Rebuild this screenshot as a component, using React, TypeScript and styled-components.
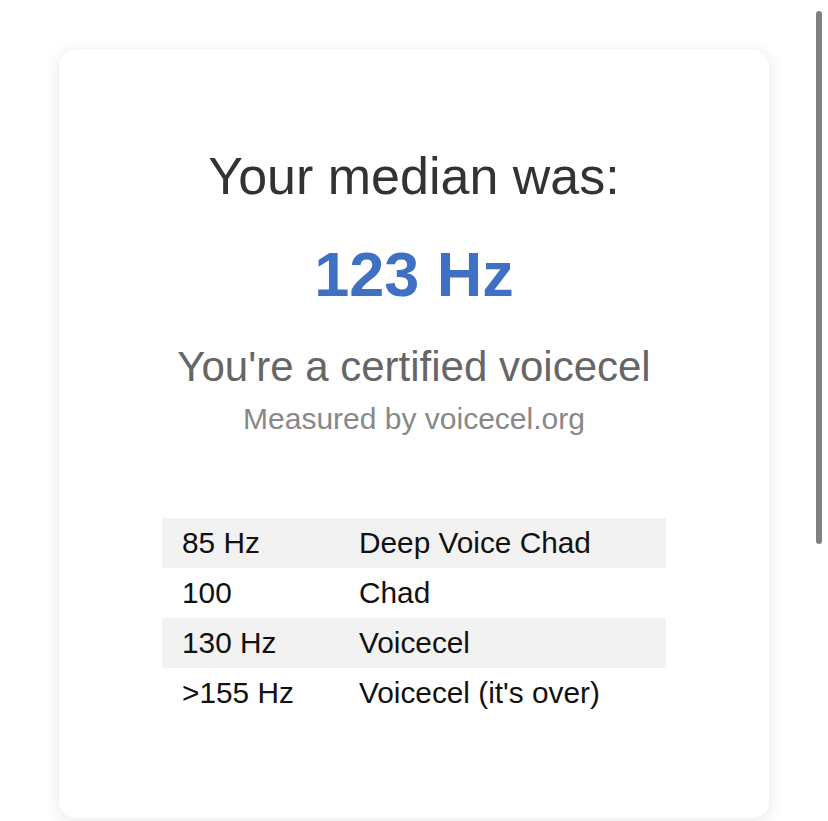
import React from "react";
import styled, { createGlobalStyle } from "styled-components";

const GlobalStyle = createGlobalStyle`
  html, body {
    margin: 0;
    padding: 0;
    background: #ffffff;
    overflow: hidden;
  }
  body {
    font-family: "Liberation Sans", Arial, Helvetica, sans-serif;
  }
`;

const Page = styled.main`
  display: flex;
  justify-content: center;
  padding-top: 50px;
  height: 821px;
  box-sizing: border-box;
`;

const Card = styled.section`
  width: 710px;
  height: 768px;
  box-sizing: border-box;
  background: #ffffff;
  border-radius: 16px;
  box-shadow: 0 2px 16px rgba(0, 0, 0, 0.1);
  display: flex;
  flex-direction: column;
  align-items: center;
  padding-top: 96px;
  text-align: center;
`;

const Heading = styled.h1`
  margin: 0;
  font-size: 52px;
  line-height: 60px;
  font-weight: 400;
  color: #333333;
`;

const Value = styled.div`
  margin-top: 30px;
  font-size: 63px;
  line-height: 76px;
  font-weight: 700;
  color: #4070c4;
`;

const Verdict = styled.p`
  margin: 31px 0 0;
  font-size: 42px;
  line-height: 48px;
  color: #666666;
`;

const Credit = styled.p`
  margin: 10px 0 0;
  font-size: 30px;
  line-height: 36px;
  color: #888888;
`;

const Table = styled.table`
  margin-top: 81px;
  width: 504px;
  border-collapse: collapse;
  text-align: left;
`;

const Row = styled.tr<{ $shaded: boolean }>`
  background: ${(p) => (p.$shaded ? "#f2f2f2" : "transparent")};
  height: 50px;
`;

const Cell = styled.td<{ $first?: boolean }>`
  padding: 0 0 0 ${(p) => (p.$first ? "20px" : "0")};
  width: ${(p) => (p.$first ? "177px" : "auto")};
  font-size: 29.8px;
  line-height: 50px;
  color: #111111;
  vertical-align: middle;
  white-space: nowrap;
`;

const ScrollThumb = styled.div`
  position: fixed;
  top: 11px;
  right: 6px;
  width: 6px;
  height: 533px;
  border-radius: 3px;
  background: #808080;
`;

const rows = [
  ["85 Hz", "Deep Voice Chad"],
  ["100", "Chad"],
  ["130 Hz", "Voicecel"],
  [">155 Hz", "Voicecel (it's over)"],
];

export default function App() {
  return (
    <>
      <GlobalStyle />
      <Page>
        <Card>
          <Heading>Your median was:</Heading>
          <Value>123 Hz</Value>
          <Verdict>You're a certified voicecel</Verdict>
          <Credit>Measured by voicecel.org</Credit>
          <Table>
            <tbody>
              {rows.map(([hz, label], i) => (
                <Row key={hz} $shaded={i % 2 === 0}>
                  <Cell $first>{hz}</Cell>
                  <Cell>{label}</Cell>
                </Row>
              ))}
            </tbody>
          </Table>
        </Card>
      </Page>
      <ScrollThumb />
    </>
  );
}
